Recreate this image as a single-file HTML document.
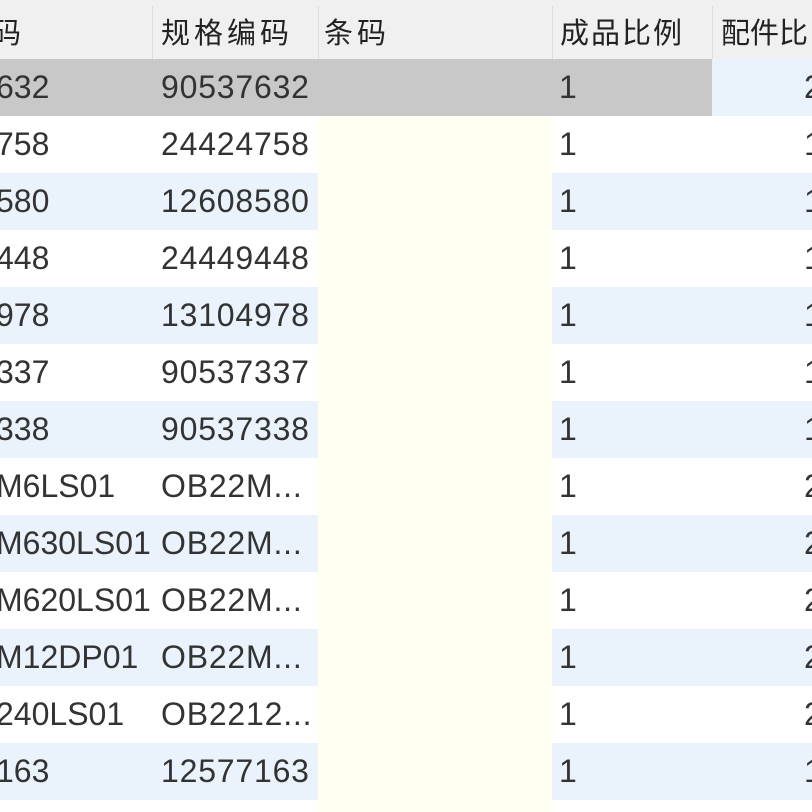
<!DOCTYPE html>
<html><head><meta charset="utf-8"><style>
*{margin:0;padding:0;box-sizing:border-box}
body{width:812px;height:812px;overflow:hidden;background:#fff;position:relative;font-family:"Liberation Sans","Noto Sans CJK SC",sans-serif;color:#333;font-size:32px;letter-spacing:0.8px}
.hdr{position:absolute;left:0;top:0;width:812px;height:59px;background:#f0f0f0}
.hsep{position:absolute;top:6px;width:1px;height:53px;background:#dcdcdc}
.ht{position:absolute;top:10px;font-size:29px;color:#222;letter-spacing:0}
.row{position:absolute;left:0;width:812px;height:57px}
.c{position:absolute;top:0;height:57px;line-height:57px;white-space:nowrap;overflow:hidden}
.c1{left:0;width:152px;letter-spacing:0}
.c1 span{position:relative;left:-4px}
.c2{left:152px;width:166px;padding-left:9px}
.c3{left:318px;width:234px;background:#fffff2}
.c4{left:552px;width:160px;padding-left:7px}
.c5{left:712px;width:100px;padding-left:92px}
.alt .c1,.alt .c2,.alt .c4,.alt .c5{background:#eaf3fc}
.sel .c1,.sel .c2,.sel .c3,.sel .c4{background:#c8c8c8}
.sel .c5{background:#eaf3fc}
</style></head><body>
<div class="hdr">
<div class="ht" style="left:-8px">码</div>
<div class="hsep" style="left:152px"></div>
<div class="ht" style="left:161px;letter-spacing:4px">规格编码</div>
<div class="hsep" style="left:318px"></div>
<div class="ht" style="left:324px;letter-spacing:4px">条码</div>
<div class="hsep" style="left:552px"></div>
<div class="ht" style="left:560px;letter-spacing:2px">成品比例</div>
<div class="hsep" style="left:712px"></div>
<div class="ht" style="left:721px">配件比</div>
</div>

<div class="row sel" style="top:59px"><div class="c c1"><span>632</span></div><div class="c c2">90537632</div><div class="c c3"></div><div class="c c4">1</div><div class="c c5">2</div></div>
<div class="row" style="top:116px"><div class="c c1"><span>758</span></div><div class="c c2">24424758</div><div class="c c3"></div><div class="c c4">1</div><div class="c c5">1</div></div>
<div class="row alt" style="top:173px"><div class="c c1"><span>580</span></div><div class="c c2">12608580</div><div class="c c3"></div><div class="c c4">1</div><div class="c c5">1</div></div>
<div class="row" style="top:230px"><div class="c c1"><span>448</span></div><div class="c c2">24449448</div><div class="c c3"></div><div class="c c4">1</div><div class="c c5">1</div></div>
<div class="row alt" style="top:287px"><div class="c c1"><span>978</span></div><div class="c c2">13104978</div><div class="c c3"></div><div class="c c4">1</div><div class="c c5">1</div></div>
<div class="row" style="top:344px"><div class="c c1"><span>337</span></div><div class="c c2">90537337</div><div class="c c3"></div><div class="c c4">1</div><div class="c c5">1</div></div>
<div class="row alt" style="top:401px"><div class="c c1"><span>338</span></div><div class="c c2">90537338</div><div class="c c3"></div><div class="c c4">1</div><div class="c c5">1</div></div>
<div class="row" style="top:458px"><div class="c c1"><span>M6LS01</span></div><div class="c c2">OB22M...</div><div class="c c3"></div><div class="c c4">1</div><div class="c c5">2</div></div>
<div class="row alt" style="top:515px"><div class="c c1"><span>M630LS01</span></div><div class="c c2">OB22M...</div><div class="c c3"></div><div class="c c4">1</div><div class="c c5">2</div></div>
<div class="row" style="top:572px"><div class="c c1"><span>M620LS01</span></div><div class="c c2">OB22M...</div><div class="c c3"></div><div class="c c4">1</div><div class="c c5">2</div></div>
<div class="row alt" style="top:629px"><div class="c c1"><span>M12DP01</span></div><div class="c c2">OB22M...</div><div class="c c3"></div><div class="c c4">1</div><div class="c c5">2</div></div>
<div class="row" style="top:686px"><div class="c c1"><span>240LS01</span></div><div class="c c2">OB2212...</div><div class="c c3"></div><div class="c c4">1</div><div class="c c5">2</div></div>
<div class="row alt" style="top:743px"><div class="c c1"><span>163</span></div><div class="c c2">12577163</div><div class="c c3"></div><div class="c c4">1</div><div class="c c5">1</div></div>
<div class="row" style="top:800px;height:12px"><div class="c c3" style="height:12px"></div></div>
</body></html>
